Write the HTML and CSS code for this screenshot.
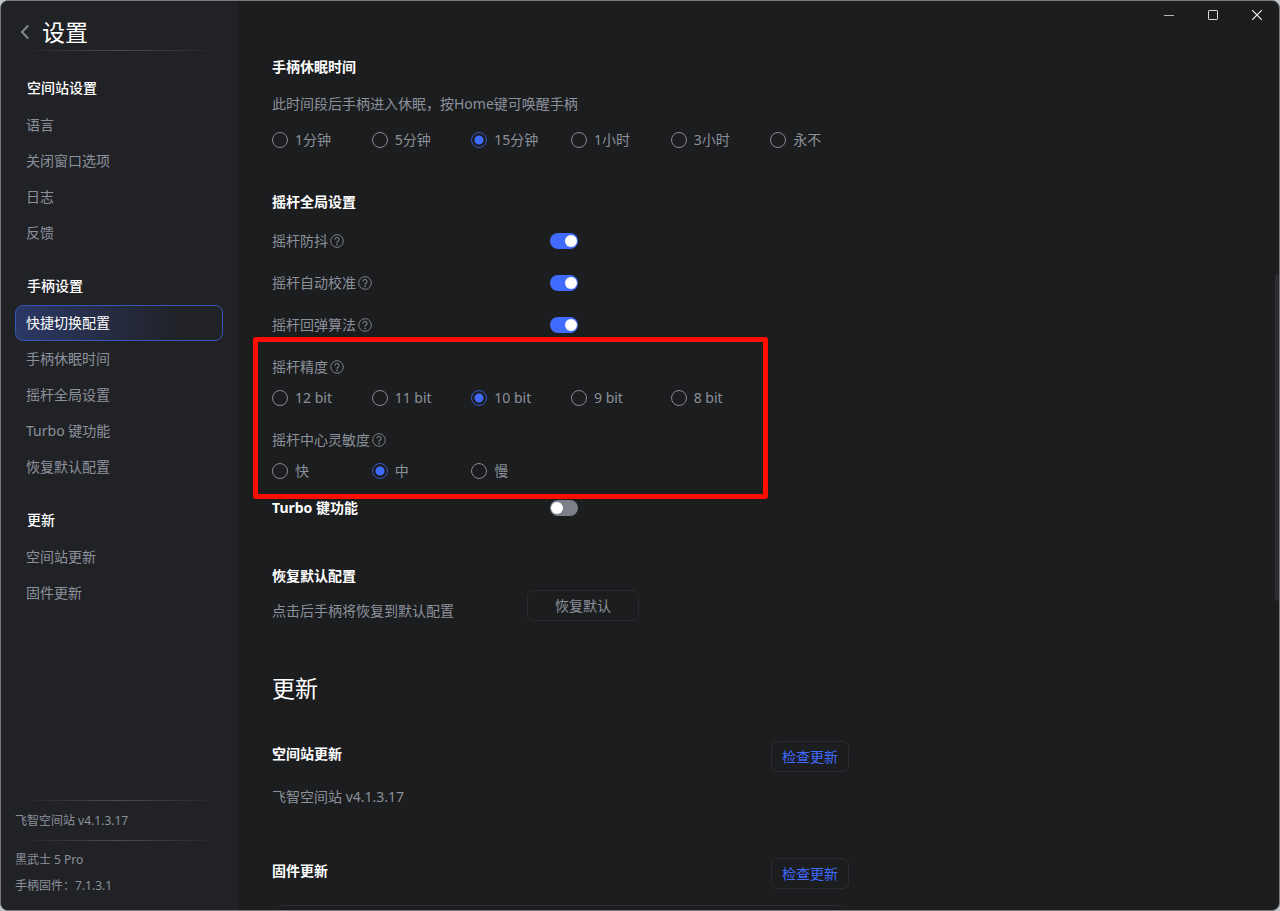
FILE: index.html
```html
<!DOCTYPE html>
<html lang="zh-CN">
<head>
<meta charset="utf-8">
<meta name="viewport" content="width=device-width, initial-scale=1">
<title>设置</title>
<link rel="stylesheet" href="styles.css">
</head>
<body>
<svg class="sprite" aria-hidden="true">
  <symbol id="help" viewBox="0 0 14 14">
    <circle cx="7" cy="7" r="6.300" fill="none" stroke="currentColor"/>
    <path d="M5 5.500a2 2 0 1 1 3 1.700c-.7.4-1 .7-1 1.500" fill="none" stroke="currentColor" stroke-width="1.100"/>
    <circle cx="7" cy="10.400" r=".8" fill="currentColor"/>
  </symbol>
</svg>
<div class="window">
  <aside class="sidebar">
    <header class="sidebar-header">
      <button class="back" type="button" aria-label="返回">
        <svg width="10" height="16" viewBox="0 0 10 16"><path d="M8.200 1.500 2 8l6.200 6.500" fill="none" stroke="currentColor" stroke-width="2"/></svg>
      </button>
      <h1 class="page-title">设置</h1>
    </header>
    <div class="rule"></div>
    <nav class="nav">
      <section class="nav-group">
        <h2 class="nav-heading">空间站设置</h2>
        <a class="nav-item" href="#language">语言</a>
        <a class="nav-item" href="#close">关闭窗口选项</a>
        <a class="nav-item" href="#log">日志</a>
        <a class="nav-item" href="#feedback">反馈</a>
      </section>
      <section class="nav-group">
        <h2 class="nav-heading">手柄设置</h2>
        <a class="nav-item active" href="#switch" aria-current="true">快捷切换配置</a>
        <a class="nav-item" href="#sleep">手柄休眠时间</a>
        <a class="nav-item" href="#stick">摇杆全局设置</a>
        <a class="nav-item" href="#turbo-key">Turbo 键功能</a>
        <a class="nav-item" href="#restore">恢复默认配置</a>
      </section>
      <section class="nav-group">
        <h2 class="nav-heading">更新</h2>
        <a class="nav-item" href="#station">空间站更新</a>
        <a class="nav-item" href="#firmware">固件更新</a>
      </section>
    </nav>
    <footer class="sidebar-footer">
      <div class="rule"></div>
      <p class="app-version">飞智空间站 v4.1.3.17</p>
      <div class="rule"></div>
      <div class="device">
        <p>黑武士 5 Pro</p>
        <p>手柄固件：7.1.3.1</p>
      </div>
    </footer>
  </aside>

  <div class="pane">
    <div class="titlebar">
      <button class="window-button" type="button" aria-label="最小化"><svg width="12" height="12" viewBox="0 0 12 12"><path d="M1 6.500h10" stroke="#b4b5b6"/></svg></button>
      <button class="window-button" type="button" aria-label="最大化"><svg width="12" height="12" viewBox="0 0 12 12"><rect x="1.500" y="1.500" width="9" height="9" rx=".6" fill="none" stroke="#dcdcdc"/></svg></button>
      <button class="window-button" type="button" aria-label="关闭"><svg width="12" height="12" viewBox="0 0 12 12"><path d="m1.200 1.200 9.600 9.600m0-9.600-9.600 9.600" stroke="#f2f2f2" stroke-width="1.200"/></svg></button>
    </div>
    <main class="content">
      <section class="section" id="sleep">
        <h2 class="heading">手柄休眠时间</h2>
        <p class="note">此时间段后手柄进入休眠，按Home键可唤醒手柄</p>
        <div class="radios" role="radiogroup" aria-label="手柄休眠时间">
          <label class="radio"><input type="radio" name="sleep">1分钟</label>
          <label class="radio"><input type="radio" name="sleep">5分钟</label>
          <label class="radio"><input type="radio" name="sleep" checked>15分钟</label>
          <label class="radio"><input type="radio" name="sleep">1小时</label>
          <label class="radio"><input type="radio" name="sleep">3小时</label>
          <label class="radio"><input type="radio" name="sleep">永不</label>
        </div>
      </section>

      <section class="section stick" id="stick">
        <h2 class="heading">摇杆全局设置</h2>
        <div class="fields">
          <div class="field">
            <div class="field-label"><label for="shake">摇杆防抖</label><button class="help" type="button" aria-label="说明"><svg><use href="#help"/></svg></button></div>
            <input class="switch" type="checkbox" role="switch" id="shake" checked>
          </div>
          <div class="field">
            <div class="field-label"><label for="calibrate">摇杆自动校准</label><button class="help" type="button" aria-label="说明"><svg><use href="#help"/></svg></button></div>
            <input class="switch" type="checkbox" role="switch" id="calibrate" checked>
          </div>
          <div class="field">
            <div class="field-label"><label for="rebound">摇杆回弹算法</label><button class="help" type="button" aria-label="说明"><svg><use href="#help"/></svg></button></div>
            <input class="switch" type="checkbox" role="switch" id="rebound" checked>
          </div>
        </div>
        <div class="marked">
          <div class="field">
            <div class="field-label"><span id="precision">摇杆精度</span><button class="help" type="button" aria-label="说明"><svg><use href="#help"/></svg></button></div>
          </div>
          <div class="radios" role="radiogroup" aria-labelledby="precision">
            <label class="radio"><input type="radio" name="precision">12 bit</label>
            <label class="radio"><input type="radio" name="precision">11 bit</label>
            <label class="radio"><input type="radio" name="precision" checked>10 bit</label>
            <label class="radio"><input type="radio" name="precision">9 bit</label>
            <label class="radio"><input type="radio" name="precision">8 bit</label>
          </div>
          <div class="field sensitivity">
            <div class="field-label"><span id="sensitivity">摇杆中心灵敏度</span><button class="help" type="button" aria-label="说明"><svg><use href="#help"/></svg></button></div>
          </div>
          <div class="radios" role="radiogroup" aria-labelledby="sensitivity">
            <label class="radio"><input type="radio" name="sensitivity">快</label>
            <label class="radio"><input type="radio" name="sensitivity" checked>中</label>
            <label class="radio"><input type="radio" name="sensitivity">慢</label>
          </div>
        </div>
      </section>

      <section class="turbo" id="turbo-key">
        <h2 class="heading turbo-title"><label for="turbo">Turbo 键功能</label></h2>
        <input class="switch" type="checkbox" role="switch" id="turbo">
      </section>

      <section class="restore" id="restore">
        <div class="restore-text">
          <h2 class="heading">恢复默认配置</h2>
          <p class="note">点击后手柄将恢复到默认配置</p>
        </div>
        <button class="button wide" type="button">恢复默认</button>
      </section>

      <h1 class="page-title updates-title">更新</h1>
      <section class="update" id="station">
        <div class="update-row">
          <h2 class="heading">空间站更新</h2>
          <button class="button check" type="button">检查更新</button>
        </div>
        <p class="note version">飞智空间站 v4.1.3.17</p>
      </section>
      <section class="update firmware" id="firmware">
        <div class="update-row">
          <h2 class="heading">固件更新</h2>
          <button class="button check" type="button">检查更新</button>
        </div>
        <div class="card"></div>
      </section>
    </main>
    <div class="scroll-thumb"></div>
  </div>
</div>
</body>
</html>
```
FILE: styles.css
```css
*, *::before, *::after { box-sizing: border-box; }
body {
  margin: 0;
  background: #c4c8cc;
  color: #8b919b;
  font: 14px/20px "Noto Sans", "Noto Sans CJK SC", sans-serif;
}
h1, h2, p { margin: 0; }
button { font: inherit; color: inherit; background: none; border: 0; padding: 0; }
.sprite { display: none; }

.window {
  display: flex;
  height: 100vh;
  border: 1px solid #77797b;
  border-radius: 8px;
  background: #1c1d1f;
  overflow: hidden;
}

/* Sidebar */
.sidebar {
  display: flex;
  flex-direction: column;
  flex: none;
  width: 237px;
  padding: 0 15px 0 14px;
  background: #212226;
}
.sidebar-header { display: flex; align-items: center; gap: 12px; height: 49px; padding: 12px 0 0 5px; }
.back { display: flex; color: #83878f; }
.page-title { font-size: 23px; line-height: 32px; font-weight: 400; color: #fff; }
.rule {
  flex: none;
  height: 1px;
  margin: 0 4px;
  background: linear-gradient(90deg, transparent, #4a4c4f 50%, transparent);
}
.nav { display: flex; flex-direction: column; gap: 16px; padding-top: 18px; }
.nav-heading { padding-left: 12px; font-size: 14px; line-height: 38px; font-weight: 500; color: #fff; }
.nav-item {
  display: block;
  border: 1px solid transparent;
  border-radius: 8px;
  padding: 0 10px;
  line-height: 34px;
  color: inherit;
  text-decoration: none;
}
.nav-item.active {
  border-color: #3555b5;
  background: linear-gradient(90deg, #2b3866, #212226 80%);
  color: #fff;
}
.sidebar-footer { margin-top: auto; padding-bottom: 11px; font-size: 12px; }
.app-version { line-height: 39px; }
.device { padding-top: 6px; line-height: 26px; }

/* Content pane */
.pane { position: relative; display: flex; flex-direction: column; flex: 1; min-width: 0; }
.titlebar { display: flex; justify-content: flex-end; flex: none; height: 28px; }
.window-button { display: grid; place-items: center; width: 44px; }
.content { flex: 1; min-height: 0; overflow: hidden; padding: 28px 34px 0; }
.scroll-thumb {
  position: absolute;
  top: 30%;
  right: 0;
  width: 4px;
  height: 36%;
  border-radius: 2px;
  background: #2c2d34;
}
.heading { font-size: 14px; line-height: 20px; font-weight: 700; color: #fff; }
.section .note { margin: 17px 0 16px; }
.stick { margin-top: 42px; }
.fields { margin-top: 8px; }

.radios { display: grid; grid-template-columns: repeat(6, 1fr); max-width: 598px; }
.radio { display: flex; align-items: center; gap: 7px; }
.radio input {
  appearance: none;
  width: 16px;
  height: 16px;
  margin: 0;
  border: 1px solid #85888e;
  border-radius: 50%;
}
.radio input:checked {
  border-color: #3457d0;
  background: radial-gradient(circle, #416bff 4px, transparent 5px);
}

.field { display: flex; align-items: center; height: 42px; }
.field-label { display: flex; align-items: center; gap: 2px; width: 278px; }
.help { display: flex; color: #7d8189; }
.help svg { width: 14px; height: 14px; }
.switch {
  appearance: none;
  display: flex;
  align-items: center;
  width: 28px;
  height: 16px;
  margin: 0;
  padding: 0 1px;
  border-radius: 8px;
  background: #7b7f88;
}
.switch::before { content: ""; width: 12px; height: 12px; border-radius: 50%; background: #fff; }
.switch:checked { justify-content: flex-end; background: #416bff; }

/* Highlight frame around the precision and sensitivity options */
.marked { position: relative; }
.marked::after {
  content: "";
  position: absolute;
  inset: -9px auto -18px -19px;
  width: 515px;
  border: 5px solid #ff0d00;
  border-radius: 3px;
  pointer-events: none;
}
.sensitivity { margin-top: 11px; }

.turbo { display: flex; align-items: center; margin-top: 17px; }
.turbo-title { width: 278px; }
.restore { display: flex; align-items: flex-end; margin-top: 48px; }
.restore-text { display: grid; gap: 15px; width: 255px; }
.button { height: 31px; padding: 0 10px; border: 1px solid #2a2b2e; border-radius: 6px; }
.wide { padding: 0 27px; }
.check { color: #416bff; }
.updates-title { margin-top: 51px; }
.update { max-width: 577px; margin-top: 37px; }
.update-row { display: flex; align-items: flex-start; justify-content: space-between; }
.update-row .heading { padding-top: 3px; }
.version { margin-top: 15px; }
.firmware { margin-top: 51px; }
.card { height: 120px; margin-top: 16px; border: 1px solid #2a2b2e; border-radius: 12px; }
```
